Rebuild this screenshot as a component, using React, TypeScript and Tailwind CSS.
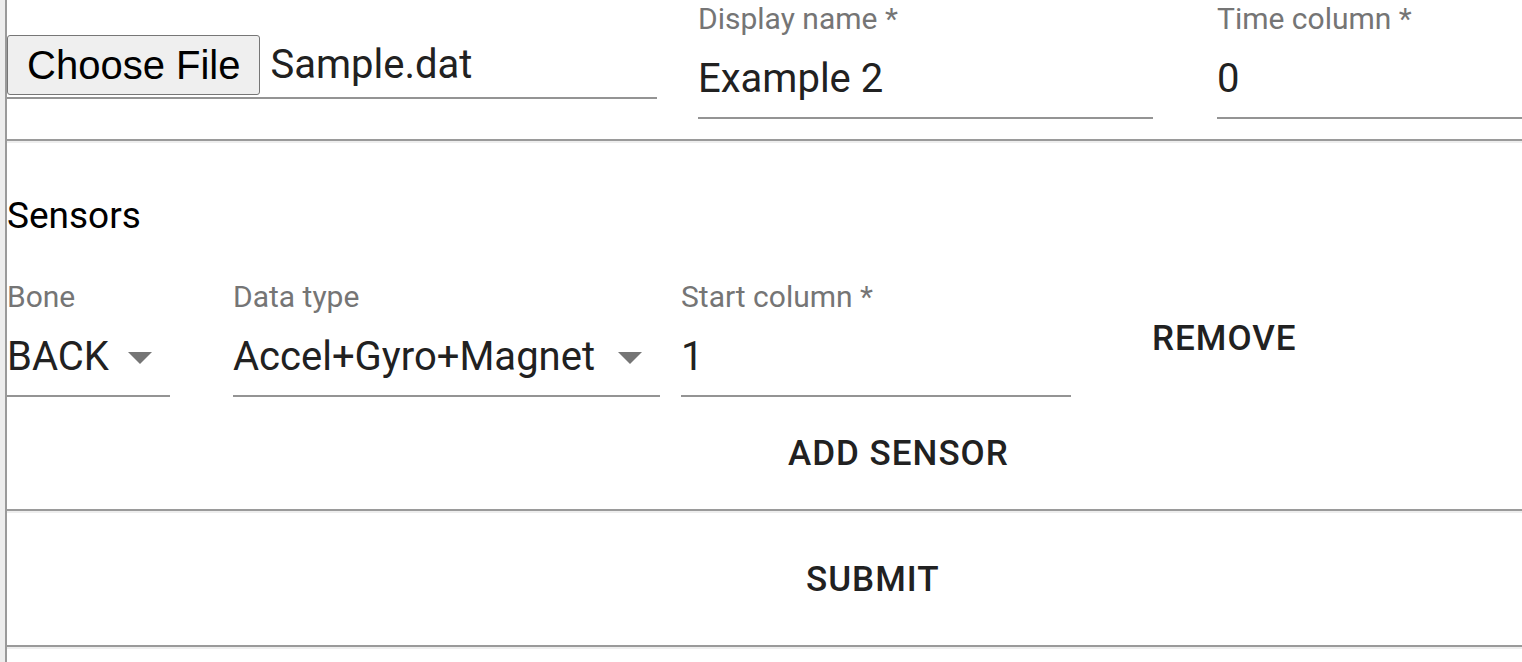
import React from "react";

const Arrow = () => (
  <svg width="24" height="12" viewBox="0 0 24 12" className="shrink-0">
    <path d="M0 0 L24 0 L12 12 Z" fill="#757575" />
  </svg>
);

function Field({
  label,
  value,
  className,
  select,
}: {
  label: string;
  value: string;
  className: string;
  select?: boolean;
}) {
  return (
    <div className={"flex flex-col " + className}>
      <div className="text-[30px] leading-[30px] text-[#757575] whitespace-nowrap">{label}</div>
      <div className="mt-[25px] flex items-center justify-between pb-[18px] border-b-2 border-[#949494]">
        <span className="text-[40px] leading-[40px] text-[#212121] whitespace-nowrap">{value}</span>
        {select && (
          <span className="mr-[18px] mt-[2px]">
            <Arrow />
          </span>
        )}
      </div>
    </div>
  );
}

function Hr() {
  return (
    <div className="flex flex-col">
      <div className="h-[2px] bg-[#9a9a9a]" />
      <div className="h-[2px] bg-[#eeeeee]" />
    </div>
  );
}

export default function App() {
  return (
    <div
      className="flex min-h-screen w-full bg-white overflow-hidden"
      style={{ fontFamily: "Roboto, 'Noto Sans', sans-serif" }}
    >
      <div className="w-[5px] shrink-0 bg-[#ededed]" />
      <div className="flex-1 flex flex-col border-l-2 border-[#9a9a9a] min-w-0">
        {/* Row 1 */}
        <div className="flex items-start h-[139px]">
          <div className="w-[650px] shrink-0 mt-[35px] flex items-center pb-[2px] border-b-2 border-[#949494]">
            <div
              className="h-[60px] px-[19px] flex items-center bg-[#efefef] border border-[#767676] rounded-[3px] text-[40px] text-black"
              style={{ fontFamily: "'Liberation Sans', Arial, sans-serif" }}
            >
              Choose File
            </div>
            <span className="ml-[10px] text-[40px] leading-[40px] text-[#212121]">Sample.dat</span>
          </div>
          <Field label="Display name *" value="Example 2" className="ml-[41px] w-[455px] shrink-0 mt-[4px]" />
          <Field label="Time column *" value="0" className="ml-[64px] flex-1 mt-[4px]" />
        </div>
        <Hr />

        {/* Sensors */}
        <div className="mt-[54px] text-[37px] leading-[37px] text-black">Sensors</div>
        <div className="flex items-start mt-[48px]">
          <Field label="Bone" value="BACK" select className="w-[163px] shrink-0" />
          <Field label="Data type" value="Accel+Gyro+Magnet" select className="ml-[63px] w-[427px] shrink-0" />
          <Field label="Start column *" value="1" className="ml-[21px] w-[390px] shrink-0" />
          <div className="ml-[81px] mt-[39px] text-[35px] leading-[35px] font-medium tracking-[1px] text-[#212121]">
            REMOVE
          </div>
        </div>
        <div className="mt-[39px] ml-[781px] text-[35px] leading-[35px] font-medium tracking-[1px] text-[#212121]">
          ADD SENSOR
        </div>
        <div className="h-[38px]" />
        <Hr />
        <div className="mt-[49px] ml-[799px] text-[35px] leading-[35px] font-medium tracking-[1px] text-[#212121]">
          SUBMIT
        </div>
        <div className="h-[48px]" />
        <Hr />
      </div>
    </div>
  );
}
